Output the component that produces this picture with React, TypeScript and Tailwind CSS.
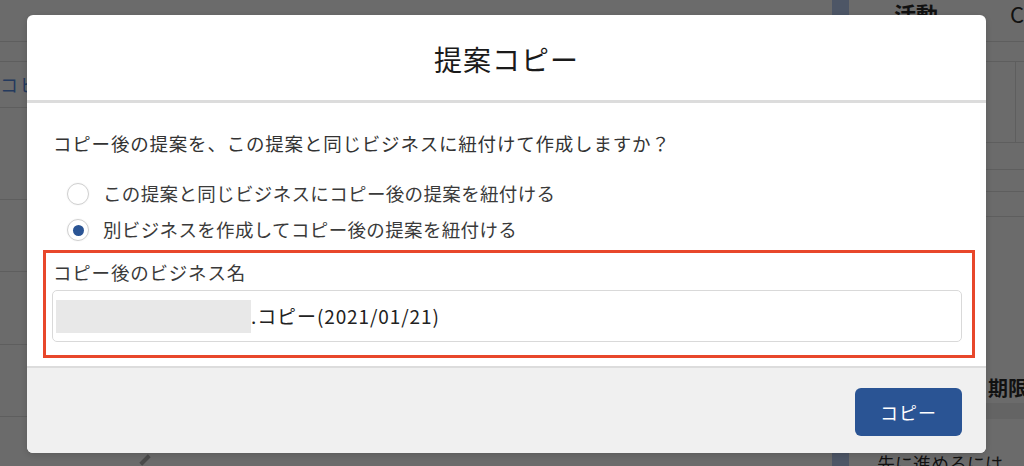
import React from 'react';

const font = { fontFamily: '"Noto Sans CJK JP", "Noto Sans", sans-serif' };

const Radio: React.FC<{ checked?: boolean; label: string }> = ({ checked, label }) => (
  <label className="flex items-center h-[32px] gap-[14px] cursor-pointer">
    <span className="w-[22px] h-[22px] rounded-full border border-[#cfcfcf] bg-white flex items-center justify-center shadow-[0_0_0_1px_rgba(0,0,0,0.02)]">
      {checked && <span className="w-[11px] h-[11px] rounded-full bg-[#2a5494]" />}
    </span>
    <span className="text-[18.5px] text-[#3a3a3a] tracking-[0.35px]">{label}</span>
  </label>
);

export default function App() {
  return (
    <div className="relative w-[1024px] h-[466px] overflow-hidden bg-[#6b6b6b]" style={font}>
      {/* page behind the overlay */}
      <div className="flex h-full">
        <div className="w-[160px] flex flex-col">
          <div className="h-[42px] border-b border-[#5e5e5e]" />
          <div className="h-[20px] border-b border-[#5e5e5e]" />
          <div className="h-[46px] border-b border-[#5e5e5e] flex items-center">
            <span className="text-[18px] text-[#243a5e] tracking-[2px] whitespace-nowrap">コピー</span>
          </div>
          <div className="h-[92px] border-b border-[#5e5e5e]" />
          <div className="h-[72px] border-b border-[#5e5e5e]" />
          <div className="h-[73px] border-b border-[#5e5e5e]" />
          <div className="h-[72px] border-b border-[#5e5e5e]" />
          <div className="flex-1 flex items-end pl-[143px]">
            <span className="w-[4px] h-[12px] bg-[#4a4a4a] rotate-45" />
          </div>
        </div>
        <div className="flex-1" />
        <div className="w-[200px] flex">
          <div className="w-[18px] ml-[8px] bg-[#4d5666]" />
          <div className="flex-1 flex flex-col">
            <div className="h-[42px] border-b border-[#5e5e5e] flex items-start pl-[45px]">
              <span className="shrink-0 whitespace-nowrap text-[22px] font-bold text-[#111] leading-[30px] -mt-[2px]">活動</span>
              <span className="shrink-0 whitespace-nowrap ml-[72px] text-[22px] text-[#111] leading-[30px] -mt-[2px]">C</span>
            </div>
            <div className="h-[20px] border-b border-[#5e5e5e]" />
            <div className="h-[81px] border-b border-[#5e5e5e] flex justify-end">
              <div className="w-[9px] border-l border-[#5e5e5e]" />
            </div>
            <div className="h-[27px] border-b border-[#5e5e5e]" />
            <div className="h-[22px] border-b border-[#5e5e5e]" />
            <div className="h-[25px] border-b border-[#5e5e5e]" />
            <div className="h-[186px] flex items-end justify-end">
              <span className="shrink-0 whitespace-nowrap text-[20px] font-bold text-[#111] leading-[30px] -mr-[4px]">期限</span>
            </div>
            <div className="h-[16px] bg-[#646464]" />
            <div className="flex-1 flex items-end pl-[28px]">
              <span className="whitespace-nowrap text-[18px] text-[#111] leading-[14px] -mb-[4px]">先に進めるには</span>
            </div>
          </div>
        </div>
      </div>

      {/* modal */}
      <div className="absolute left-[27px] top-[15px] w-[959px] h-[438px] rounded-[6px] overflow-hidden bg-white flex flex-col shadow-[0_2px_6px_rgba(0,0,0,0.15)]">
        <div className="h-[88px] flex items-center justify-center border-b-[3px] border-[#dcdcdc]">
          <h2 className="text-[28px] text-[#1a1a1a] tracking-[1px] pt-[2px]">提案コピー</h2>
        </div>

        <div className="h-[263px] flex flex-col pt-[27px]">
          <p className="text-[18.5px] leading-[26px] text-[#333] pl-[26px] tracking-[0.8px]">
            コピー後の提案を、この提案と同じビジネスに紐付けて作成しますか？
          </p>
          <div className="flex flex-col gap-[4px] pl-[40px] mt-[22px]">
            <Radio label="この提案と同じビジネスにコピー後の提案を紐付ける" />
            <Radio checked label="別ビジネスを作成してコピー後の提案を紐付ける" />
          </div>
          <div className="mt-[4px] ml-[16px] mr-[11px] border-[3px] border-[#e8472b] pt-[7px] pb-[13px] pl-[6px] pr-[10px]">
            <div className="text-[18.5px] leading-[24px] text-[#3a3a3a] pl-[1px] mb-[6px] tracking-[0.8px]">コピー後のビジネス名</div>
            <div className="h-[52px] rounded-[5px] border border-[#d9d9d9] flex items-center pl-[3px]">
              <span className="w-[195px] h-[33px] bg-[#e8e8e8]" />
              <span className="text-[19px] text-[#222] tracking-[0.9px]">.コピー(2021/01/21)</span>
            </div>
          </div>
        </div>

        <div className="flex-1 bg-[#f0f0f0] border-t-[2px] border-[#dcdcdc] flex justify-end items-start pt-[20px] pr-[24px]">
          <button className="w-[107px] h-[48px] rounded-[6px] bg-[#2a5494] text-white text-[18px] tracking-[1px]">
            コピー
          </button>
        </div>
      </div>
    </div>
  );
}
